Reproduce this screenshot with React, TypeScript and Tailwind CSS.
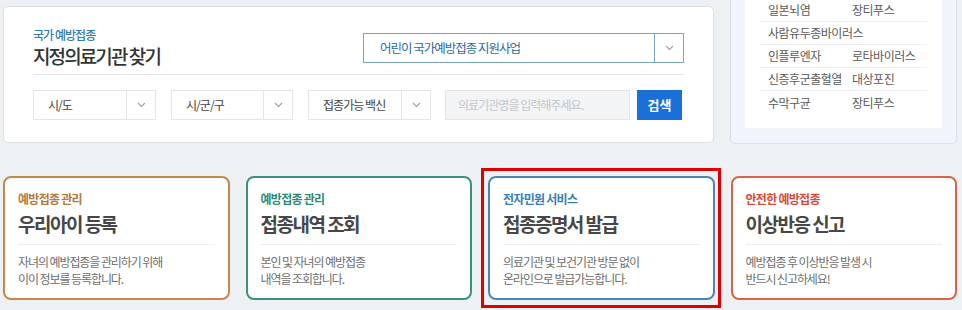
import React from "react";

const font = { fontFamily: '"Noto Sans CJK KR", "Noto Sans", sans-serif' };

function Chevron({ color = "#9aa0a6" }: { color?: string }) {
  return (
    <svg width="9" height="6" viewBox="0 0 9 6" fill="none">
      <path d="M1 1l3.5 3.5L8 1" stroke={color} strokeWidth="1.1" />
    </svg>
  );
}

function SelectBox({ label, w }: { label: string; w: string }) {
  return (
    <div className={`flex h-[30px] ${w} border border-[#e1e4e8] bg-white`}>
      <div className="flex flex-1 items-center pl-[14px] text-[12px] tracking-[-0.08em] text-[#444]">{label}</div>
      <div className="flex w-[29px] items-center justify-center border-l border-[#e1e4e8]">
        <Chevron />
      </div>
    </div>
  );
}

const rows: [string, string][] = [
  ["일본뇌염", "장티푸스"],
  ["사람유두종바이러스", ""],
  ["인플루엔자", "로타바이러스"],
  ["신증후군출혈열", "대상포진"],
  ["수막구균", "장티푸스"],
];

const cards = [
  {
    label: "예방접종 관리",
    title: "우리아이 등록",
    d1: "자녀의 예방접종을 관리하기 위해",
    d2: "이이 정보를 등록합니다.",
    border: "border-[#bf8a4a]",
    color: "text-[#b27a3a]",
    hl: false,
  },
  {
    label: "예방접종 관리",
    title: "접종내역 조회",
    d1: "본인 및 자녀의 예방접종",
    d2: "내역을 조회합니다.",
    border: "border-[#3f8f7e]",
    color: "text-[#2f8a74]",
    hl: false,
  },
  {
    label: "전자민원 서비스",
    title: "접종증명서 발급",
    d1: "의료기관 및 보건기관 방문 없이",
    d2: "온라인으로 발급가능합니다.",
    border: "border-[#4a86b8]",
    color: "text-[#3a7cb4]",
    hl: true,
  },
  {
    label: "안전한 예방접종",
    title: "이상반응 신고",
    d1: "예방접종 후 이상반응 발생 시",
    d2: "반드시 신고하세요!",
    border: "border-[#d8644c]",
    color: "text-[#d64a35]",
    hl: false,
  },
];

export default function App() {
  return (
    <div style={font} className="h-[310px] w-[962px] overflow-hidden bg-[#eef1f4] pl-[3px]">
      <div className="flex w-[954px] items-start gap-[16px]">
        {/* left panel */}
        <div className="mt-[6px] w-[711px] rounded-[5px] border border-[#dcdfe3] bg-white px-[29px] pt-[20px] pb-[22px]">
          <div className="flex items-start justify-between border-b border-[#e3e5e8] pb-[7px]">
            <div>
              <div className="text-[12px] leading-[16px] font-medium tracking-[-0.08em] text-[#2f7cae]">국가 예방접종</div>
              <div className="mt-[2px] text-[19px] leading-[22px] font-medium tracking-[-0.1em] text-[#333]">지정의료기관 찾기</div>
            </div>
            <div className="mt-[6px] flex h-[30px] w-[321px] border border-[#7aa4c6] bg-white">
              <div className="flex flex-1 items-center pl-[16px] text-[12.5px] tracking-[-0.08em] text-[#2c6aa0]">어린이 국가예방접종 지원사업</div>
              <div className="flex w-[29px] items-center justify-center border-l border-[#7aa4c6]">
                <Chevron />
              </div>
            </div>
          </div>
          <div className="mt-[15px] flex items-center">
            <SelectBox label="시/도" w="w-[123px]" />
            <div className="w-[15px]" />
            <SelectBox label="시/군/구" w="w-[122px]" />
            <div className="w-[15px]" />
            <SelectBox label="접종가능 백신" w="w-[123px]" />
            <div className="w-[14px]" />
            <div className="flex h-[30px] w-[185px] items-center border border-[#e3e5e9] bg-[#f3f4f6] pl-[12px] text-[12px] tracking-[-0.08em] text-[#c3c6cb]">
              의료기관명을 입력해주세요.
            </div>
            <div className="ml-[7px] flex h-[30px] w-[45px] items-center justify-center bg-[#1b6fd8] text-[13px] font-bold text-white">
              검색
            </div>
          </div>
        </div>
        {/* right panel */}
        <div className="-mt-[2px] w-[227px] rounded-b-[5px] border border-[#d9e0ea] bg-[#f1f5fb] px-[14px] pb-[15px]">
          <div className="bg-white px-[15px] pb-[14px]">
            {rows.map(([a, b], i) => (
              <div
                key={i}
                className={`flex h-[23px] items-center pl-[8px] text-[12px] tracking-[-0.04em] text-[#5a5a5a] ${i < rows.length - 1 ? "border-b border-[#eceef1]" : ""}`}
              >
                <div className={b ? "w-[84px] whitespace-nowrap" : "whitespace-nowrap"}>{a}</div>
                {b && <div>{b}</div>}
              </div>
            ))}
          </div>
        </div>
      </div>
      {/* cards */}
      <div className="mt-[32px] grid w-[954px] grid-cols-4 gap-[16px]">
        {cards.map((c, i) => (
          <div key={i} className="relative">
            {c.hl && (
              <div className="pointer-events-none absolute -top-[8px] -bottom-[8px] -left-[7px] -right-[6px] border-[3px] border-[#e00000]" />
            )}
            <div className={`h-[124px] rounded-[8px] border-2 ${c.border} bg-white px-[13px] pt-[13px]`}>
              <div className={`text-[12px] leading-[16px] font-bold tracking-[-0.06em] ${c.color}`}>{c.label}</div>
              <div className="mt-[4px] border-b border-[#eceef0] pb-[7px] text-[19px] leading-[26px] font-bold tracking-[-0.08em] text-[#474747]">
                {c.title}
              </div>
              <div className="mt-[8px] text-[12px] leading-[17px] tracking-[-0.09em] text-[#6e6e6e]">
                <div>{c.d1}</div>
                <div>{c.d2}</div>
              </div>
            </div>
          </div>
        ))}
      </div>
    </div>
  );
}
